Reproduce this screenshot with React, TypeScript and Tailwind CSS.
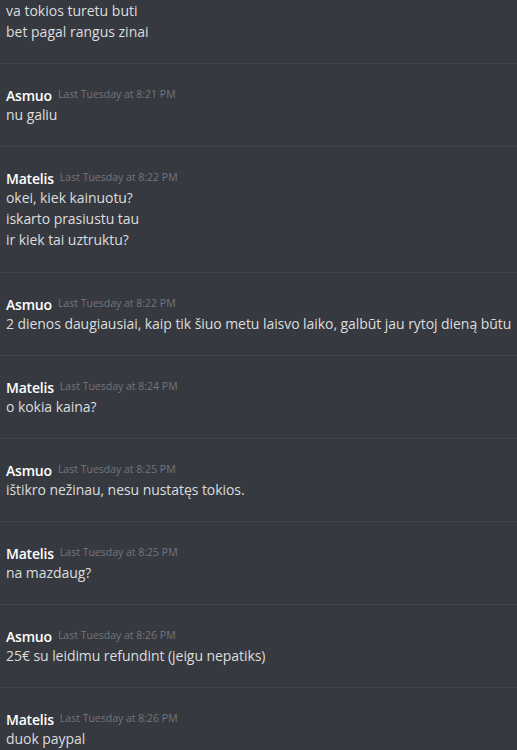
type Msg = { author: string; time: string; lines: string[] };

const messages: Msg[] = [
  { author: "Asmuo", time: "Last Tuesday at 8:21 PM", lines: ["nu galiu"] },
  {
    author: "Matelis",
    time: "Last Tuesday at 8:22 PM",
    lines: ["okei, kiek kainuotu?", "iskarto prasiustu tau", "ir kiek tai uztruktu?"],
  },
  {
    author: "Asmuo",
    time: "Last Tuesday at 8:22 PM",
    lines: ["2 dienos daugiausiai, kaip tik šiuo metu laisvo laiko, galbūt jau rytoj dieną būtu"],
  },
  { author: "Matelis", time: "Last Tuesday at 8:24 PM", lines: ["o kokia kaina?"] },
  { author: "Asmuo", time: "Last Tuesday at 8:25 PM", lines: ["ištikro nežinau, nesu nustatęs tokios."] },
  { author: "Matelis", time: "Last Tuesday at 8:25 PM", lines: ["na mazdaug?"] },
  { author: "Asmuo", time: "Last Tuesday at 8:26 PM", lines: ["25€ su leidimu refundint (jeigu nepatiks)"] },
  { author: "Matelis", time: "Last Tuesday at 8:26 PM", lines: ["duok paypal"] },
];

const Message = ({ msg }: { msg: Msg }) => (
  <div className={`border-t border-[#42454a] px-[6px] pt-[22px] ${msg.lines.length > 1 ? "pb-[22px]" : "pb-[21px]"}`}>
    <div className="flex h-[18px] items-center gap-[6px]">
      <span className="text-[14px] font-semibold tracking-[-0.2px] text-white">{msg.author}</span>
      <span className="text-[10.5px] text-[#72767d]">{msg.time}</span>
    </div>
    {msg.lines.map((l, i) => (
      <div key={i} className="text-[14px] leading-[21px] tracking-[-0.06px] text-[#dcddde] whitespace-nowrap">
        {l}
      </div>
    ))}
  </div>
);

export default function App() {
  return (
    <div
      className="h-[750px] w-[517px] overflow-hidden bg-[#36393f]"
      style={{ fontFamily: '"Open Sans", "Noto Sans", sans-serif' }}
    >
      {/* tail of the previous message, cut off at the top */}
      <div className="px-[6px] pb-[21px]">
        <div className="text-[14px] leading-[21px] text-[#dcddde]">va tokios turetu buti</div>
        <div className="text-[14px] leading-[21px] text-[#dcddde]">bet pagal rangus zinai</div>
      </div>
      {messages.map((m, i) => (
        <Message key={i} msg={m} />
      ))}
    </div>
  );
}
